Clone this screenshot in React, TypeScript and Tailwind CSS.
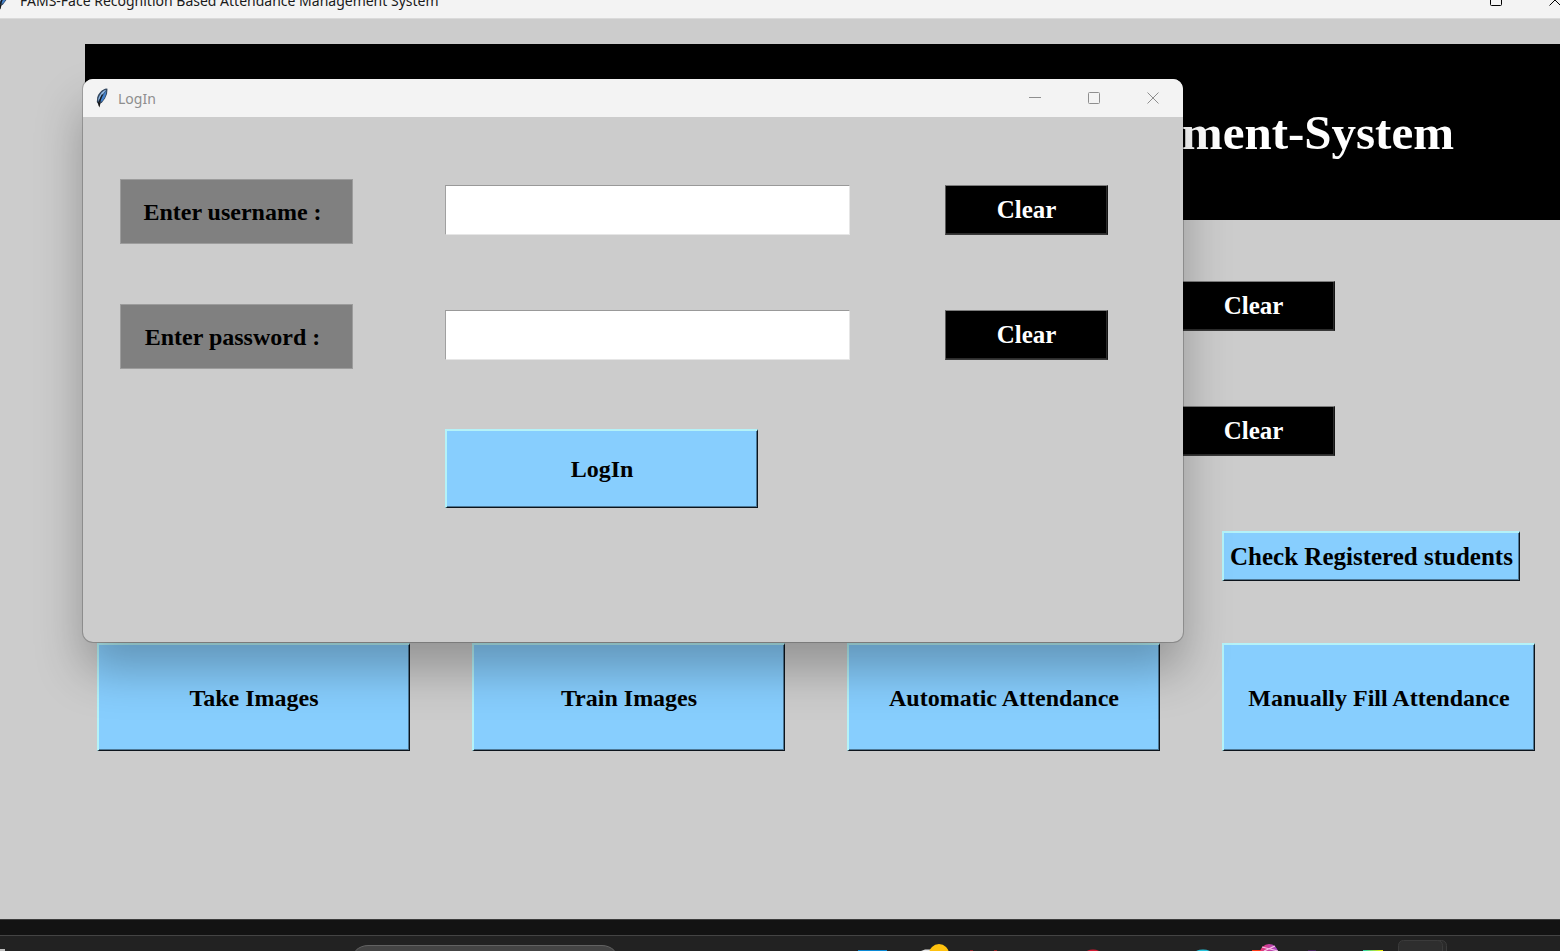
import React, { useState } from "react";

const raised =
  "border-t-2 border-l-2 border-r border-b border-t-[#b4f2f8] border-l-[#b4f2f8] border-r-[#0c141c] border-b-[#0c141c] bg-[#87cefe] shadow-[inset_-1px_-1px_0_#4d7896] text-black";
const raisedDark =
  "h-[50px] w-[163px] shrink-0 border border-t-[#7c7c7c] border-l-[#5a5a5a] border-r-[#141414] border-b-[#3a3a3a] bg-black shadow-[inset_-1px_-1px_0_#2c2c2c] text-white text-[25px]";

function Feather({ className }: { className?: string }) {
  return (
    <svg viewBox="0 0 14 20" className={className} aria-hidden="true">
      <path d="M11 0.500C7 1.500 3.500 5 2.200 9.500L1.800 14L3.500 16.500L7 14.500L10 10.500L12 6L12.500 0.800Z" fill="#33475f" />
      <path d="M10.500 1.800C7.500 3 5 6 3.500 10L3 13.500L6 8.500L10.800 2.500Z" fill="#8fb6e2" />
      <path d="M11.300 2.500L7.500 8L5.200 13.500L7 13.500L9.500 10L11 6Z" fill="#4482cc" />
      <path d="M7.500 6.500L6 9.500L4.500 14" stroke="#101820" strokeWidth="1.200" fill="none" />
      <path d="M2.500 13.500L5.500 15L4.500 19.500L3.500 17.500Z" fill="#141414" />
    </svg>
  );
}

function Minimize() {
  return (
    <svg width="12" height="12" viewBox="0 0 12 12" fill="none" stroke="currentColor" aria-hidden="true">
      <path d="M0 5.500H12" />
    </svg>
  );
}
function Maximize() {
  return (
    <svg width="12" height="12" viewBox="0 0 12 12" fill="none" stroke="currentColor" aria-hidden="true">
      <rect x="0.500" y="0.500" width="11" height="11" rx="1" />
    </svg>
  );
}
function Close() {
  return (
    <svg width="12" height="12" viewBox="0 0 12 12" fill="none" stroke="currentColor" aria-hidden="true">
      <path d="M0.500 0.500L11.500 11.500M11.500 0.500L0.500 11.500" />
    </svg>
  );
}

type FieldProps = {
  id: string;
  label: string;
  type: string;
  value: string;
  onChange: (v: string) => void;
};

function Field({ id, label, type, value, onChange }: FieldProps) {
  return (
    <div className="flex items-start">
      <label
        htmlFor={id}
        className="flex h-[65px] w-[233px] shrink-0 items-center justify-center border border-[#9c9c9c] bg-[#808080] pr-2 text-black"
      >
        {label}
      </label>
      <input
        id={id}
        type={type}
        value={value}
        onChange={(e) => onChange(e.target.value)}
        className="mt-[6px] ml-[92px] h-[50px] min-w-0 flex-1 border border-t-[#999999] border-l-[#a0a0a0] border-r-[#e6e6e6] border-b-[#e6e6e6] bg-white px-1 outline-none"
      />
      <button type="button" onClick={() => onChange("")} className={`mt-[6px] ml-[95px] ${raisedDark}`}>
        Clear
      </button>
    </div>
  );
}

function LoginWindow() {
  const [user, setUser] = useState("");
  const [pass, setPass] = useState("");
  return (
    <section
      aria-label="LogIn"
      className="absolute top-[79px] right-[377px] left-[83px] h-[563px] overflow-hidden rounded-[10px] bg-[#cccccc] shadow-[0_0_0_1px_rgba(0,0,0,0.2),0_28px_48px_rgba(0,0,0,0.28)]"
    >
      <header className="flex h-[38px] items-center bg-[#f3f3f3] pr-6 pl-3 font-['Noto_Sans',sans-serif] text-[14px] font-normal text-[#8e8e8e]">
        <Feather className="h-5 w-[14px]" />
        <span className="ml-[9px]">LogIn</span>
        <div className="ml-auto flex gap-[47px]">
          <button type="button" aria-label="Minimize"><Minimize /></button>
          <button type="button" aria-label="Maximize"><Maximize /></button>
          <button type="button" aria-label="Close"><Close /></button>
        </div>
      </header>
      <form className="flex flex-col gap-[60px] pt-[62px] pr-[75px] pl-[37px]" onSubmit={(e) => e.preventDefault()}>
        <Field id="username" label="Enter username :" type="text" value={user} onChange={setUser} />
        <Field id="password" label="Enter password :" type="password" value={pass} onChange={setPass} />
        <button type="submit" className={`ml-[325px] h-[79px] w-[313px] ${raised}`}>
          LogIn
        </button>
      </form>
    </section>
  );
}

function Taskbar() {
  return (
    <footer className="h-8 shrink-0 border-t border-[#3c3c3c] bg-[#131313] pt-[15px]">
      <div className="flex h-4 items-start overflow-hidden border-t border-[#444444] bg-[#222222]">
        <span className="mt-[13px] h-1 w-[5px] bg-[#bdbdbd]" />
        <div className="mt-[9px] ml-[345px] h-9 w-[270px] shrink-0 rounded-full border border-[#626262] bg-[#444444]" />
        <svg className="ml-auto mr-[110px] shrink-0" width="600" height="15" viewBox="0 0 600 15" aria-hidden="true">
          <defs>
            <linearGradient id="mix">
              <stop offset="0" stopColor="#21d3b0" />
              <stop offset="1" stopColor="#fdf000" />
            </linearGradient>
            <linearGradient id="ball">
              <stop offset="0" stopColor="#e8336f" />
              <stop offset="1" stopColor="#a64fd0" />
            </linearGradient>
          </defs>
          <rect x="8" y="14" width="29" height="2" fill="#0a8ad6" />
          <path d="M71 15L75 13.500H82V15Z" fill="#e6e6e6" />
          <circle cx="89" cy="18" r="10" fill="#ffc20e" />
          <path d="M120 14.500h3M144 14.500h3" stroke="#8f1f22" />
          <ellipse cx="243" cy="18" rx="8" ry="4.500" fill="#d01830" />
          <ellipse cx="353" cy="18" rx="9" ry="4.500" fill="#25c3dc" />
          <rect x="402" y="14" width="10" height="2" fill="#ff3a17" />
          <circle cx="419" cy="17" r="9" fill="url(#ball)" />
          <path d="M412 11L428 15M425 10L414 15" stroke="#f6c5e6" strokeWidth="1.200" />
          <path d="M458 14.500h8" stroke="#44205a" />
          <rect x="513" y="14" width="20" height="2" fill="url(#mix)" />
          <rect x="560.500" y="4.500" width="36" height="30" rx="5" fill="#2a2a2a" stroke="#3b3b3b" />
          <rect x="548.500" y="4.500" width="44" height="30" rx="5" fill="#2e2e2e" stroke="#3b3b3b" />
        </svg>
      </div>
    </footer>
  );
}

export default function App() {
  return (
    <div className="relative flex h-screen min-h-[800px] min-w-[1200px] flex-col overflow-hidden bg-[#cccccc] font-['Liberation_Serif',serif] text-[24px] font-bold">
      <header className="flex h-[19px] shrink-0 items-end overflow-hidden border-b border-[#dadada] bg-[#f3f3f3] font-['Noto_Sans',sans-serif] text-[14px] font-normal text-[#1a1a1a]">
        <div className="flex h-[36px] w-full shrink-0 items-center">
          <Feather className="-ml-1 h-5 w-[14px] shrink-0" />
          <h1 className="ml-[10px] whitespace-nowrap">FAMS-Face Recognition Based Attendance Management System</h1>
          <div className="-mr-px ml-auto flex shrink-0 gap-[47px] text-black">
            <button type="button" aria-label="Maximize window"><Maximize /></button>
            <button type="button" aria-label="Close window"><Close /></button>
          </div>
        </div>
      </header>

      <main className="flex-1 pt-[25px]">
        <div className="ml-[85px] flex h-[176px] items-center justify-end bg-black pt-[2px] pr-[106px] text-[49px] text-white">
          <h2>ment-System</h2>
        </div>
        <div className="flex flex-col items-end gap-[75px] pt-[61px] pr-10">
          <button type="button" className={`mr-[185px] ${raisedDark}`}>Clear</button>
          <button type="button" className={`mr-[185px] ${raisedDark}`}>Clear</button>
          <button type="button" className={`h-[50px] w-[298px] text-[25px] whitespace-nowrap ${raised}`}>
            Check Registered students
          </button>
        </div>
        <div className="grid grid-cols-4 gap-[62px] pt-[62px] pr-[25px] pl-[97px]">
          {["Take Images", "Train Images", "Automatic Attendance", "Manually Fill Attendance"].map((name) => (
            <button key={name} type="button" className={`h-[108px] whitespace-nowrap ${raised}`}>
              {name}
            </button>
          ))}
        </div>
      </main>

      <Taskbar />
      <LoginWindow />
    </div>
  );
}
